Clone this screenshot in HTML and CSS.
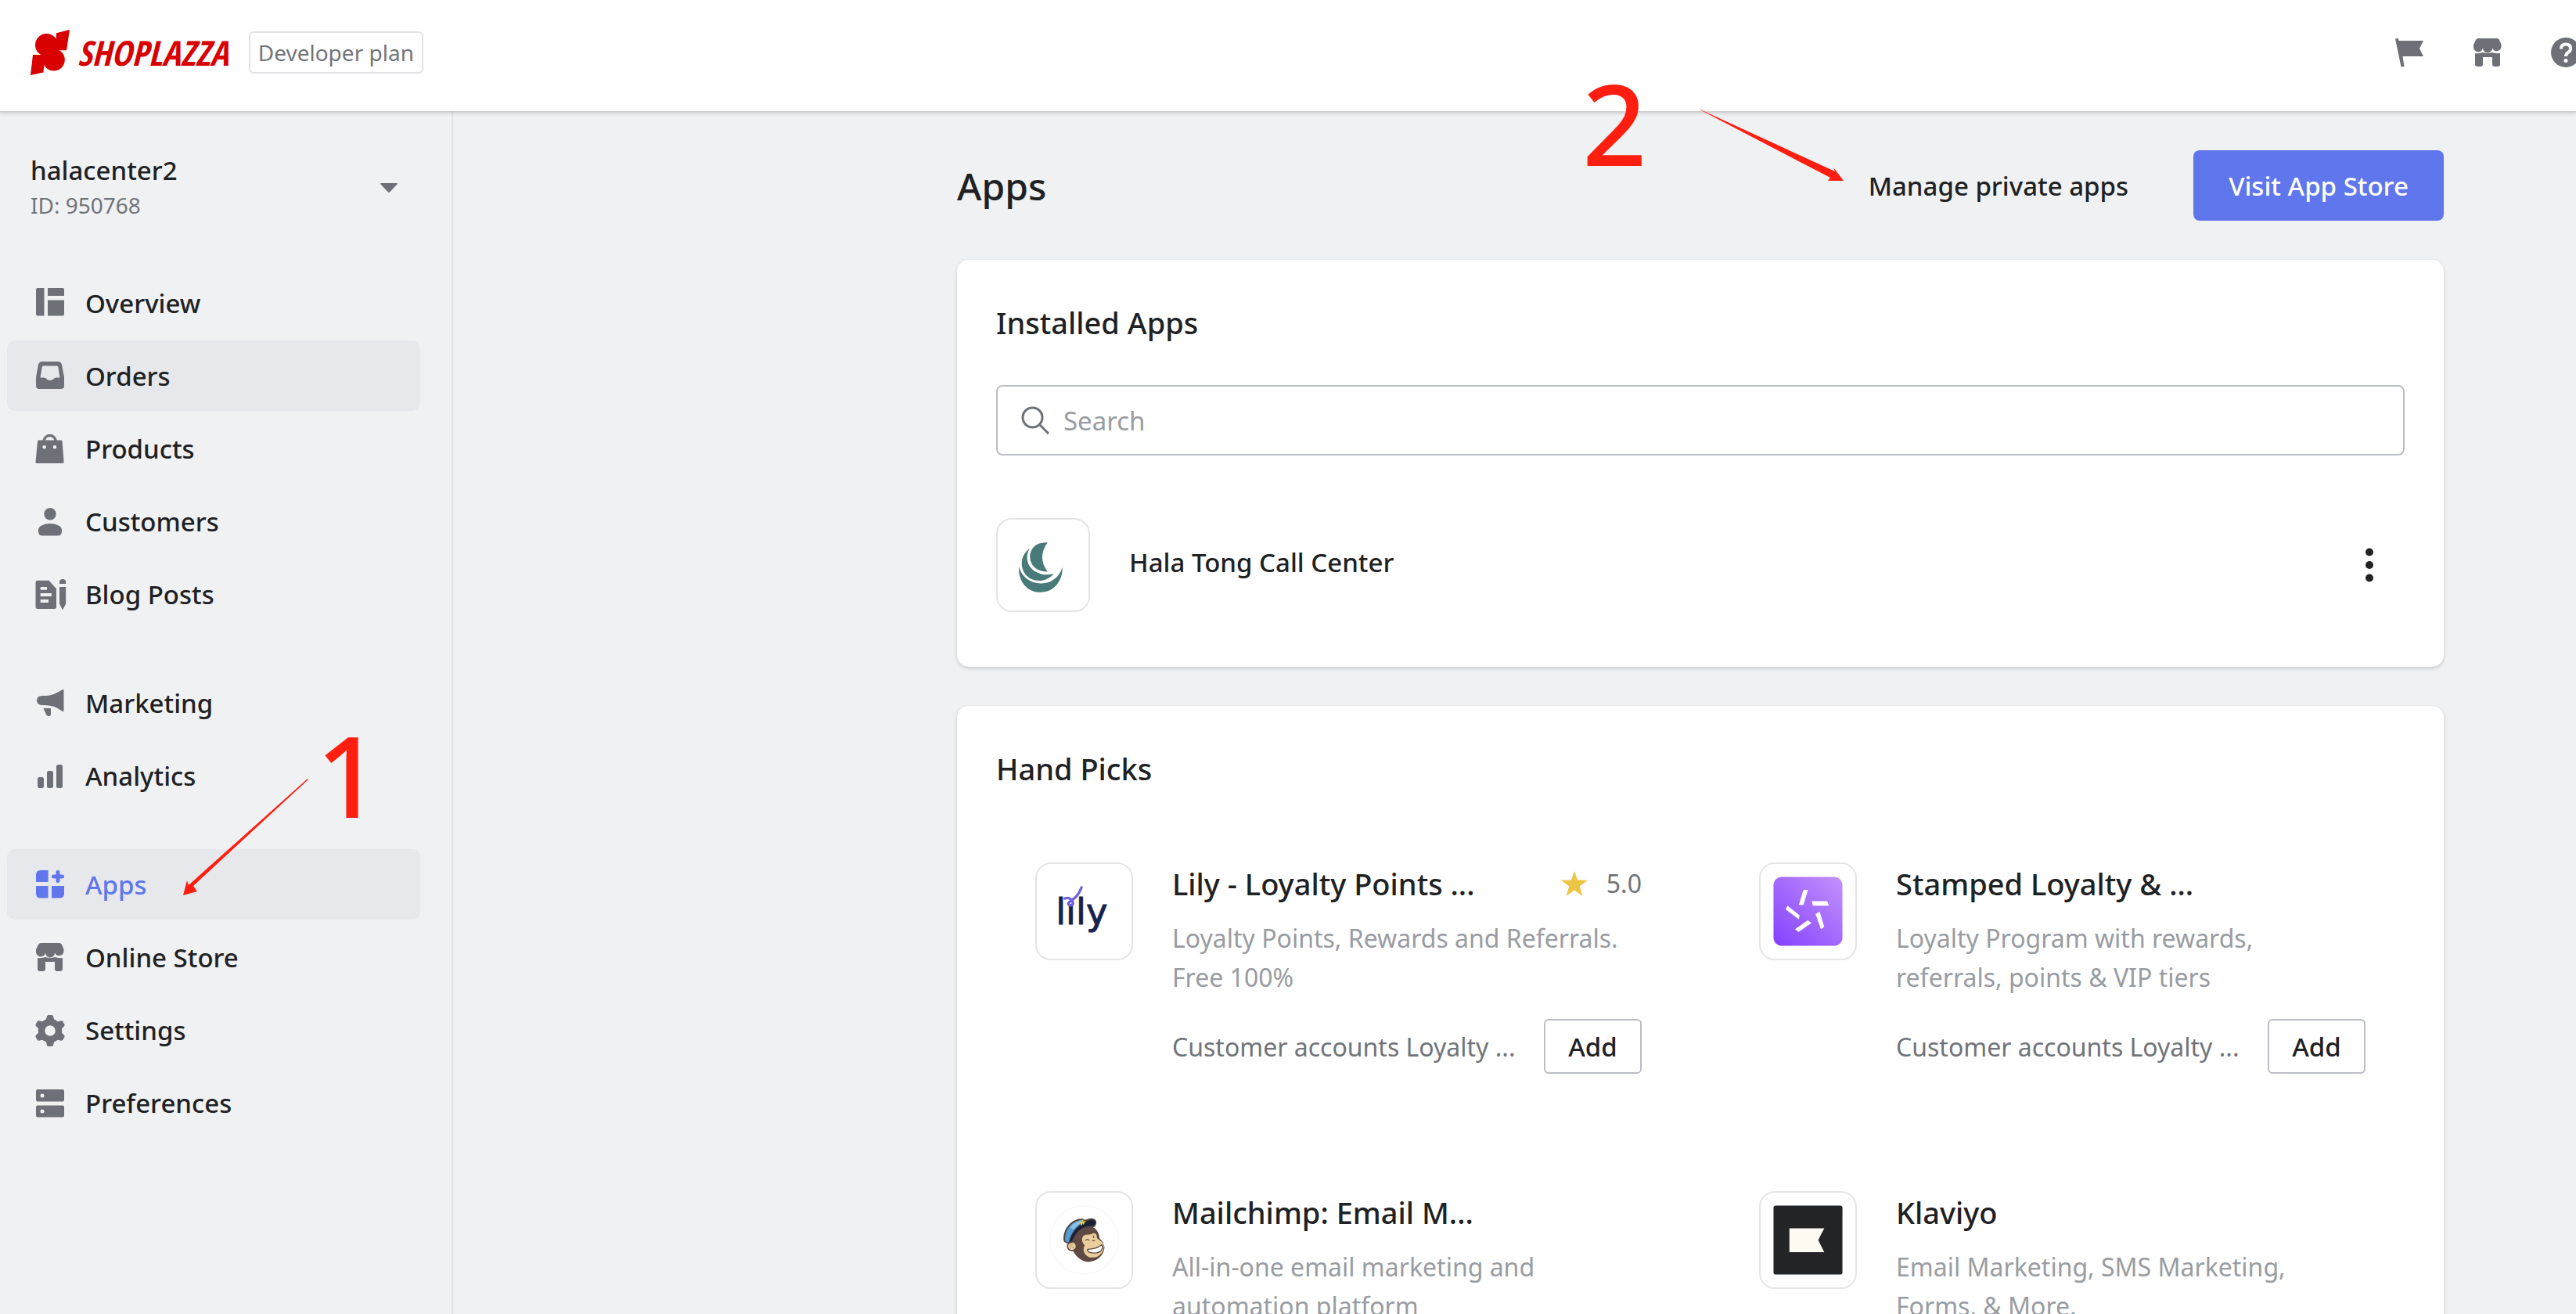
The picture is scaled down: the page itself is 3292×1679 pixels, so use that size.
FILE: index.html
```html
<!DOCTYPE html>
<html lang="en">
<head>
<meta charset="utf-8">
<meta name="viewport" content="width=device-width, initial-scale=1">
<title>Apps - Shoplazza</title>
<link rel="stylesheet" href="styles.css">
</head>
<body>
<svg class="sprite" aria-hidden="true">
  <symbol id="store" viewBox="0 0 50 50">
    <path d="M13 7H37Q39 7 40 9L42.500 15V17A6 6 0 0 1 31 19.500 A6 6 0 0 1 19 19.500 A6 6 0 0 1 7 17V15L10 9Q11 7 13 7Z"/>
    <path d="M9 26Q15 26.500 19 25Q25 27 31 25Q35 26.500 41 26V40Q41 43 38 43H34Q31 43 31 40V31H19V40Q19 43 16 43H12Q9 43 9 40Z"/>
  </symbol>
</svg>

<header class="topbar">
  <a class="brand" href="#" aria-label="Shoplazza">
    <svg class="brand-mark" viewBox="0 0 50 58"><circle cx="20.500" cy="19.500" r="14.500"/><circle cx="29.800" cy="38.500" r="14"/><path d="M50 0L33 4.300L32.400 15L20 33H30L36 26.300H46Z"/><path d="M3 32L0 58L16.500 54.600L17.500 45L30 40L20 32Z"/></svg>
    <span class="brand-name">SHOPLAZZA</span>
  </a>
  <span class="plan">Developer plan</span>
  <div class="topbar-actions">
    <button class="icon-button" aria-label="Guides"><svg viewBox="0 0 50 50"><path d="M7 7.500L11 7L11.500 10H43L38 20L43 30H16.500L18.500 43L14.500 43.500Z"/></svg></button>
    <button class="icon-button" aria-label="View store"><svg viewBox="0 0 50 50"><use href="#store"/></svg></button>
    <button class="icon-button" aria-label="Help"><svg viewBox="0 0 50 50"><circle cx="25" cy="25" r="19"/><path d="M19 20.500Q19 14.500 25 14.500T31 20Q31 23 28 25T25 30" fill="none" stroke="#fff" stroke-width="4"/><circle cx="25" cy="35.500" r="2.500" fill="#fff"/></svg></button>
  </div>
</header>

<div class="layout">
  <aside class="sidebar">
    <button class="shop">
      <span class="shop-text"><span class="shop-name">halacenter2</span><span class="shop-id">ID: 950768</span></span>
      <svg class="caret" viewBox="0 0 22 12"><path d="M1 0H21Q22.500 0 21.500 1.500L12 11.500Q11 12.500 10 11.500L.5 1.500Q-.5 0 1 0Z"/></svg>
    </button>
    <nav class="nav">
      <ul class="nav-group">
        <li><a class="nav-item" href="#"><svg viewBox="0 0 50 50"><path d="M9 6H17.500V41.500H9Q7 41.500 7 39.500V8Q7 6 9 6ZM22 6H41Q43 6 43 8V16H22ZM22 21.500H43V39.500Q43 41.500 41 41.500H22Z"/></svg>Overview</a></li>
        <li><a class="nav-item hovered" href="#"><svg viewBox="0 0 50 50"><path fill-rule="evenodd" d="M15 7H35Q39 7 40 11L43 27V38Q43 42 39 42H11Q7 42 7 38V27L10 11Q11 7 15 7ZM16 12.500Q15 12.500 14.700 14L12.500 27.500H17C20 27.500 21 31 25 31S30 27.500 33 27.500H37.500L35.300 14Q35 12.500 34 12.500Z"/></svg>Orders</a></li>
        <li><a class="nav-item" href="#"><svg viewBox="0 0 50 50"><path fill-rule="evenodd" d="M10.500 14.500H39Q40.500 14.500 40.600 16L42.600 42.500Q42.600 44 41 44H8Q6.500 44 6.500 42.500L9 16Q9 14.500 10.500 14.500ZM17.600 21A2.300 2.300 0 1 0 17.600 25.600A2.300 2.300 0 1 0 17.600 21ZM31 21A2.300 2.300 0 1 0 31 25.600A2.300 2.300 0 1 0 31 21Z"/><path d="M17 15.500A7.700 8.300 0 0 1 32.200 15.500" fill="none" stroke="currentColor" stroke-width="3.500"/></svg>Products</a></li>
        <li><a class="nav-item" href="#"><svg viewBox="0 0 50 50"><circle cx="25" cy="15.700" r="7.700"/><path d="M10 36C10 31 18 28 25 28S40 31 40 36V38Q40 43.500 34.500 43.500H15.500Q10 43.500 10 38Z"/></svg>Customers</a></li>
        <li><a class="nav-item" href="#"><svg viewBox="0 0 50 50"><path fill-rule="evenodd" d="M9 7.700H23.400L33 18.300V42Q33 44 31 44H9Q6.500 44 6.500 42V10Q6.500 7.700 9 7.700ZM12.700 16V19.700H21V16ZM12.700 24V28H26.800V24ZM12.700 32V36H23V32Z"/><path d="M37 12V10A4 4 0 0 1 45.200 10V12ZM37 16H45.200V37.500L41 45.500L37 37.500Z"/></svg>Blog Posts</a></li>
      </ul>
      <ul class="nav-group">
        <li><a class="nav-item" href="#"><svg viewBox="0 0 50 50"><path d="M14 16C28 16.500 32 13 41 8Q42.500 7.500 42.500 9V35Q42.500 37 41 36C32 30 28 28 14 28A6 6 0 0 1 14 16ZM16.500 32H26V40Q26 42 24 42H22.500Q21 42 20 40Z"/></svg>Marketing</a></li>
        <li><a class="nav-item" href="#"><svg viewBox="0 0 50 50"><rect x="9" y="27" width="8" height="14" rx="2.500"/><rect x="21" y="19" width="8" height="22" rx="2.500"/><rect x="33" y="11" width="8" height="30" rx="2.500"/></svg>Analytics</a></li>
      </ul>
      <ul class="nav-group">
        <li><a class="nav-item current" href="#" aria-current="page"><svg viewBox="0 0 50 50"><path d="M13 7H22.600V22H7V13Q7 7 13 7ZM7 27H22.600V42.600H13Q7 42.600 7 37ZM27 27H43V37Q43 42.600 37 42.600H27Z"/><path d="M35 9.500V20.500M29.500 15H40.500" stroke="currentColor" stroke-width="5" stroke-linecap="round"/></svg>Apps</a></li>
        <li><a class="nav-item" href="#"><svg viewBox="0 0 50 50"><use href="#store"/></svg>Online Store</a></li>
        <li><a class="nav-item" href="#"><svg viewBox="0 0 50 50"><circle cx="25" cy="26" r="11" fill="none" stroke="currentColor" stroke-width="8.500"/><path d="M21 7.500Q21.300 6 23 6H27Q28.700 6 29 7.500L30.500 13H19.500ZM21 44.500Q21.300 46 23 46H27Q28.700 46 29 44.500L30.500 39H19.500Z"/><path transform="rotate(60 25 26)" d="M21 7.500Q21.300 6 23 6H27Q28.700 6 29 7.500L30.500 13H19.500ZM21 44.500Q21.300 46 23 46H27Q28.700 46 29 44.500L30.500 39H19.500Z"/><path transform="rotate(120 25 26)" d="M21 7.500Q21.300 6 23 6H27Q28.700 6 29 7.500L30.500 13H19.500ZM21 44.500Q21.300 46 23 46H27Q28.700 46 29 44.500L30.500 39H19.500Z"/></svg>Settings</a></li>
        <li><a class="nav-item" href="#"><svg viewBox="0 0 50 50"><path fill-rule="evenodd" d="M9 8H41Q43 8 43 10V21.500Q43 23.500 41 23.500H9Q7 23.500 7 21.500V10Q7 8 9 8ZM15 13.500A2.500 2.500 0 1 0 15 18.500A2.500 2.500 0 1 0 15 13.500ZM9 28.500H41Q43 28.500 43 30.500V41.500Q43 43.500 41 43.500H9Q7 43.500 7 41.500V30.500Q7 28.500 9 28.500ZM15 33.500A2.500 2.500 0 1 0 15 38.500A2.500 2.500 0 1 0 15 33.500Z"/></svg>Preferences</a></li>
      </ul>
    </nav>
  </aside>

  <main class="content">
    <div class="page-head">
      <h1>Apps</h1>
      <a class="text-link" href="#">Manage private apps</a>
      <button class="primary">Visit App Store</button>
    </div>

    <section class="card installed">
      <h2>Installed Apps</h2>
      <label class="search">
        <svg viewBox="0 0 36 36" aria-hidden="true"><circle cx="14.500" cy="14.500" r="12.500"/><path d="M23.500 23.500L35 35"/></svg>
        <input type="search" placeholder="Search" aria-label="Search">
      </label>
      <div class="installed-row">
        <svg class="installed-tile" viewBox="10 8 360 360"><g fill="#477a78"><path d="M208 99C160 95 138 125 138 155C138 190 165 216 208 214C180 180 180 135 208 99Z"/><path d="M138 122C100 145 95 200 125 230C150 258 205 258 232 222C190 235 150 215 135 190C122 165 125 140 138 122Z"/><path d="M94 194C90 250 125 296 180 296C235 296 268 250 267 196C255 235 225 262 180 261C140 260 105 235 94 194Z"/></g></svg>
        <span class="installed-name">Hala Tong Call Center</span>
        <button class="more" aria-label="More actions"><svg viewBox="0 0 50 50"><circle cx="25" cy="8.500" r="5"/><circle cx="25" cy="25" r="5"/><circle cx="25" cy="41.500" r="5"/></svg></button>
      </div>
    </section>

    <section class="card picks">
      <h2>Hand Picks</h2>
      <div class="grid">
        <article class="app">
          <svg class="tile" viewBox="0 0 125 125"><text class="lily" x="25" y="80" aria-label="lily">lıly</text><path d="M59 31C56 39 51 45 46 48C41 51 40 54 44.500 54.500C49 54 48 50 46 48C44 45 41 44 37 45.500" fill="none" stroke="#6f60dc" stroke-width="3.500" stroke-linecap="round"/></svg>
          <div class="app-body">
            <div class="app-head"><h3>Lily - Loyalty Points ...</h3><span class="rating"><svg viewBox="0 0 34 32" aria-hidden="true"><path d="M17 0L21 11.500L34 11.800L23.700 19.500L27.500 32L17 24.500L6.500 32L10.300 19.500L0 11.800L13 11.500Z"/></svg>5.0</span></div>
            <p class="desc">Loyalty Points, Rewards and Referrals. Free 100%</p>
            <div class="app-foot"><span>Customer accounts Loyalty ...</span><button class="add">Add</button></div>
          </div>
        </article>
        <article class="app">
          <svg class="tile" viewBox="0 0 125 125"><defs><linearGradient id="violet" x1="0" y1="1" x2="1" y2="0"><stop offset="0" stop-color="#8440ff"/><stop offset="1" stop-color="#c392fb"/></linearGradient></defs><rect x="17" y="17" width="91" height="91" rx="11" fill="url(#violet)"/><path fill="#fff" d="M56.500 34H62.500L56.500 54H50.500ZM67.500 49H88L90 55H69ZM35.600 55L51.500 68L50.500 73L33 60ZM78 63L84 83L79.500 86L72.500 66ZM62.500 74L67 78L50 90L45.500 86Z"/></svg>
          <div class="app-body">
            <div class="app-head"><h3>Stamped Loyalty &amp; ...</h3></div>
            <p class="desc">Loyalty Program with rewards, referrals, points &amp; VIP tiers</p>
            <div class="app-foot"><span>Customer accounts Loyalty ...</span><button class="add">Add</button></div>
          </div>
        </article>
        <article class="app">
          <svg class="tile" viewBox="10 10 375 375">
            <circle cx="197" cy="197" r="135" fill="none" stroke="#eee" stroke-width="2"/>
            <path fill="#5f4943" d="M150 200C150 160 190 136 220 142C250 150 258 175 258 190L272 206L278 225C276 262 245 284 212 284C180 282 160 255 150 235Z"/>
            <circle cx="149" cy="222" r="20" fill="#5f4943"/><circle cx="149" cy="222" r="15" fill="#ecd2a2"/><path d="M142 228Q140 214 153 214M149 222L156 230" fill="none" stroke="#a5805e" stroke-width="3"/>
            <path fill="#e9cd9d" d="M192 184C200 172 215 178 226 174C240 165 249 175 248 190L268 205C276 212 276 222 274 232C268 262 236 272 214 264C196 254 190 235 200 218C190 208 186 196 192 184Z"/>
            <path fill="#fff" stroke="#5f4943" stroke-width="4" d="M211 234C230 234 252 228 268 216C274 235 262 248 240 249C222 249 209 246 211 234Z"/>
            <path d="M202 199Q210 190 218 199M235 180V190M229 200H240" fill="none" stroke="#6b5046" stroke-width="4"/>
            <path fill="#50433f" d="M116 200C112 150 150 112 190 112L202 118C220 108 240 108 246 124C246 140 240 150 226 146C190 146 160 170 152 206C140 214 120 212 116 200Z"/>
            <path fill="#559bd3" d="M122 198C120 155 150 122 188 118L198 126C170 140 145 165 137 205C130 206 124 204 122 198Z"/>
            <path fill="#8bc3ea" d="M142 147C155 130 172 121 188 119L194 125C178 133 165 143 155 156Z"/>
            <path fill="#172036" d="M198 130C212 120 232 112 241 124C243 136 236 142 224 142C188 142 164 165 150 200L140 205C146 172 168 145 198 130Z"/>
            <path d="M182 127L187 136L192 122L195 132L201 122" fill="none" stroke="#e8c93b" stroke-width="5"/>
          </svg>
          <div class="app-body">
            <div class="app-head"><h3>Mailchimp: Email M...</h3></div>
            <p class="desc">All-in-one email marketing and automation platform</p>
          </div>
        </article>
        <article class="app">
          <svg class="tile" viewBox="0 0 125 125"><rect x="17" y="17" width="91" height="91" rx="3" fill="#232426"/><path d="M38 47H84L76 62.500L84 78.500H38Z" fill="#fffbf3"/></svg>
          <div class="app-body">
            <div class="app-head"><h3>Klaviyo</h3></div>
            <p class="desc">Email Marketing, SMS Marketing, Forms, &amp; More.</p>
          </div>
        </article>
      </div>
    </section>
  </main>
</div>

<span class="mark mark-one">1</span>
<svg class="arrow arrow-one" viewBox="0 0 160 150"><path d="M159 0L160 1L13 137L18 144L0 149L5 130L7 136Z"/></svg>
<span class="mark mark-two">2</span>
<svg class="arrow arrow-two" viewBox="0 0 184 92"><path d="M0 0L1 0L173 79L171 74L184 91L164 91L167 87Z"/></svg>
</body>
</html>
```
FILE: styles.css
```css
* {
  box-sizing: border-box;
}

body {
  position: relative;
  height: 100vh;
  margin: 0;
  overflow: hidden;
  display: flex;
  flex-direction: column;
  background: #f0f1f3;
  color: #202123;
  font-family: "Noto Sans", "Open Sans", sans-serif;
  font-size: 33px;
}

h1, h2, h3, p, ul {
  margin: 0;
  padding: 0;
  font-weight: 500;
}

ul {
  list-style: none;
}

button {
  margin: 0;
  padding: 0;
  border: 0;
  background: none;
  color: inherit;
  font: inherit;
  cursor: pointer;
}

a {
  color: inherit;
  text-decoration: none;
}

svg {
  flex: none;
  fill: currentColor;
}

.sprite {
  display: none;
}

/* Top bar */
.topbar {
  position: relative;
  flex: none;
  display: flex;
  align-items: center;
  height: 142px;
  padding: 0 0 8px 39px;
  overflow: hidden;
  background: #fff;
  box-shadow: 0 0 5px 2px rgba(0, 0, 0, 0.2);
}

.brand {
  display: flex;
  align-items: center;
  gap: 10px;
  color: #d80000;
}

.brand-mark {
  width: 50px;
  height: 58px;
}

.brand-name {
  font-family: "Open Sans Condensed", "Roboto Condensed", sans-serif;
  font-size: 44px;
  font-style: italic;
  font-weight: 700;
  line-height: 58px;
}

.plan {
  margin-left: 26px;
  padding: 0 10px;
  border: 2px solid #e1e2e6;
  border-radius: 6px;
  color: #707479;
  font-size: 28px;
  line-height: 50px;
}

.topbar-actions {
  display: flex;
  gap: 50px;
  margin: 0 -12px 0 auto;
  color: #6d7177;
}

.icon-button,
.icon-button svg {
  display: block;
  width: 50px;
  height: 50px;
}

/* Sidebar */
.layout {
  flex: 1;
  display: flex;
  min-height: 0;
}

.sidebar {
  flex: none;
  width: 579px;
  padding-top: 54px;
  border-right: 2px solid #e3e4e7;
}

.shop {
  display: flex;
  align-items: center;
  justify-content: space-between;
  width: 100%;
  padding: 0 69px 0 39px;
  text-align: left;
}

.shop-name,
.shop-id {
  display: block;
  line-height: 44px;
}

.shop-name {
  font-weight: 500;
}

.shop-id {
  color: #707479;
  font-size: 28px;
}

.caret {
  width: 22px;
  height: 12px;
  color: #6d7177;
}

.nav {
  display: flex;
  flex-direction: column;
  gap: 49px;
  margin-top: 58px;
  padding: 0 40px 0 9px;
}

.nav-group {
  display: flex;
  flex-direction: column;
  gap: 3px;
}

.nav-item {
  display: flex;
  align-items: center;
  gap: 20px;
  height: 90px;
  padding-left: 30px;
  border-radius: 10px;
  font-weight: 500;
}

.nav-item svg {
  width: 50px;
  height: 50px;
  color: #6d7177;
}

.hovered,
.current {
  background: #e7e8ec;
}

.current,
.current svg {
  color: #5f76ec;
}

/* Main column */
.content {
  flex: 1;
  display: flex;
  flex-direction: column;
  gap: 50px;
  padding: 50px 169px 0 644px;
}

.page-head {
  flex: none;
  display: flex;
  align-items: center;
  height: 90px;
}

h1 {
  margin-right: auto;
  font-size: 48px;
}

.text-link {
  margin-right: 83px;
  font-weight: 500;
}

.primary {
  width: 320px;
  height: 90px;
  border-radius: 8px;
  background: #5f76ec;
  color: #fff;
  font-weight: 500;
}

.card {
  padding: 50px 50px 70px;
  border-radius: 15px;
  background: #fff;
  box-shadow: 0 2px 5px rgba(0, 0, 0, 0.16);
}

h2 {
  font-size: 38px;
  line-height: 60px;
}

.search {
  display: flex;
  align-items: center;
  gap: 18px;
  height: 90px;
  margin-top: 50px;
  padding: 0 30px;
  border: 2px solid #bbbec3;
  border-radius: 8px;
}

.search svg {
  width: 36px;
  height: 36px;
  fill: none;
  stroke: #6d7177;
  stroke-width: 3;
}

.search input {
  flex: 1;
  height: 50px;
  padding: 0;
  border: 0;
  outline: 0;
  background: none;
  color: inherit;
  font: inherit;
}

.search input::placeholder {
  color: #999ca1;
  opacity: 1;
}

.installed {
  flex: none;
}

.installed-row {
  display: flex;
  align-items: center;
  margin-top: 80px;
}

.installed-tile,
.tile {
  border: 2px solid #e4e5e6;
  border-radius: 20px;
}

.installed-tile {
  width: 120px;
  height: 120px;
}

.installed-name {
  flex: 1;
  padding: 0 0 8px 50px;
  font-weight: 500;
}

.more,
.more svg {
  display: block;
  width: 50px;
  height: 50px;
}

.more {
  margin-right: 20px;
}

.picks {
  flex: 1;
}

.grid {
  display: grid;
  grid-template-columns: 1fr 1fr;
  gap: 150px;
  padding: 90px 50px 0;
}

.app {
  display: flex;
  align-items: flex-start;
  gap: 50px;
}

.tile {
  width: 125px;
  height: 125px;
}

.lily {
  fill: #16234d;
  stroke: #16234d;
  stroke-width: 1px;
  font-family: "DejaVu Sans", sans-serif;
  font-size: 48px;
}

.app-body {
  flex: 1;
  min-width: 0;
}

.app-head {
  display: flex;
  align-items: center;
  justify-content: space-between;
}

h3 {
  font-size: 38px;
  line-height: 54px;
}

.rating {
  display: flex;
  align-items: center;
  gap: 24px;
  color: #707479;
  font-size: 32px;
  line-height: 50px;
}

.rating svg {
  width: 34px;
  height: 32px;
  color: #edc545;
}

.desc {
  margin-top: 18px;
  color: #999ca1;
  font-size: 32px;
  font-weight: 400;
  line-height: 50px;
}

.app-foot {
  display: flex;
  align-items: center;
  justify-content: space-between;
  margin-top: 28px;
  color: #707479;
  font-size: 32px;
  white-space: nowrap;
}

.add {
  width: 125px;
  height: 70px;
  border: 2px solid #bbbec3;
  border-radius: 6px;
  color: #202123;
  font-size: 33px;
  font-weight: 500;
}

/* Step annotations laid over the page */
.mark,
.arrow {
  position: absolute;
  color: #ff1e10;
  pointer-events: none;
}

.mark {
  font-size: 144px;
  font-weight: 500;
  line-height: 144px;
}

.mark-one {
  left: 404px;
  top: 917px;
}

.mark-two {
  left: 2022px;
  top: 84px;
}

.arrow-one {
  left: 234px;
  top: 995px;
  width: 160px;
  height: 150px;
}

.arrow-two {
  left: 2172px;
  top: 140px;
  width: 184px;
  height: 92px;
}
```
